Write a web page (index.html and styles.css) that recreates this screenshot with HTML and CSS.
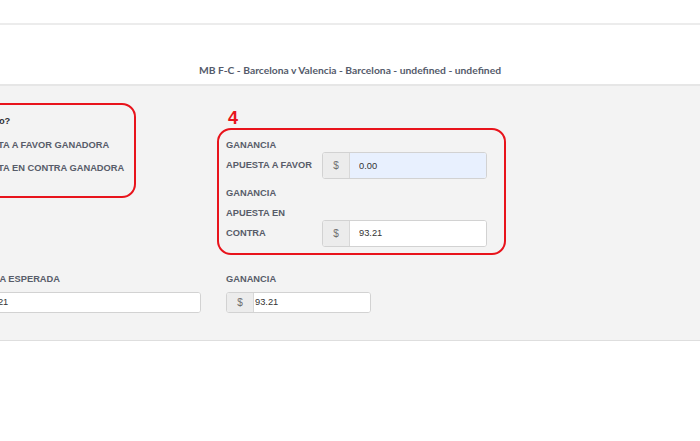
FILE: index.html
```html
<!DOCTYPE html>
<html lang="es">
<head>
  <meta charset="UTF-8" />
  <title>MB F-C</title>
  <link rel="stylesheet" href="styles.css">
</head>
<body>
  <div class="topbar"></div>

  <div class="title-bar">
    <span class="title">MB F-C - Barcelona v Valencia - Barcelona - undefined - undefined</span>
  </div>

  <div class="content">
    <div class="form">
      <div class="top-row">
        <!-- resultado -->
        <div class="col-left">
          <div class="result-box mark">
            <div class="question">¿Resultado?</div>
            <label class="radio">APUESTA A FAVOR GANADORA</label>
            <label class="radio">APUESTA EN CONTRA GANADORA</label>
          </div>
        </div>

        <!-- ganancias -->
        <div class="col-right">
          <div class="step">4</div>
          <div class="gain-box mark">
            <div class="gain-row">
              <div class="gain-label">GANANCIA APUESTA A FAVOR</div>
              <div class="input-group big">
                <span class="addon">$</span>
                <input type="text" class="field autofill" value="0.00" />
              </div>
            </div>
            <div class="gain-row">
              <div class="gain-label">GANANCIA APUESTA EN CONTRA</div>
              <div class="input-group big">
                <span class="addon">$</span>
                <input type="text" class="field" value="93.21" />
              </div>
            </div>
          </div>
        </div>
      </div>

      <div class="bottom-row">
        <div class="field-block left">
          <div class="field-label">GANANCIA ESPERADA</div>
          <div class="input-group small">
            <span class="addon">$</span>
            <input type="text" class="field flat" value="93.21" />
          </div>
        </div>
        <div class="field-block right">
          <div class="field-label">GANANCIA</div>
          <div class="input-group small">
            <span class="addon">$</span>
            <input type="text" class="field flat" value="93.21" />
          </div>
        </div>
      </div>
    </div>
  </div>
</body>
</html>
```

FILE: styles.css
```css
body {
  margin: 0;
  font-family: "Liberation Sans", Arial, sans-serif;
  background: #fff;
  overflow: hidden;
}

/* cabecera */
.topbar {
  height: 23px;
  background: #fff;
  border-bottom: 2px solid #ececec;
}
.title-bar {
  height: 61px;
  background: #fff;
  border-bottom: 2px solid #e6e6e6;
  display: flex;
  justify-content: center;
  align-items: flex-end;
  padding-bottom: 8px;
  box-sizing: border-box;
}
.title {
  font-family: Lato, "Liberation Sans", sans-serif;
  font-weight: bold;
  font-size: 10.3px;
  color: #555b6b;
}

/* zona gris */
.content {
  background: #f3f3f3;
  border-bottom: 1px solid #dedede;
  padding: 17px 0 27px;
  height: 255px;
  box-sizing: border-box;
}
.form {
  margin-left: -40px;
  color: #575c69;
  font-size: 9.3px;
  font-weight: bold;
}
.top-row {
  display: flex;
  align-items: flex-start;
}
.col-left {
  width: 241px;
}
.col-right {
  margin-left: 16px;
  padding-top: 6px;
}

.mark {
  border: 2px solid #e8131b;
  border-radius: 14px;
  box-sizing: border-box;
}

.result-box {
  margin-left: -20px;
  width: 196px;
  padding: 6px 0 18px 12px;
}
.question {
  color: #2e2f33;
  line-height: 20px;
}
.radio {
  display: block;
  padding-left: 12px;
  line-height: 20px;
  margin-top: 3.5px;
}

.step {
  color: #e8131b;
  font-size: 18px;
  font-weight: bold;
  line-height: 19px;
  padding-left: 11px;
}
.gain-box {
  width: 289px;
  padding: 6px 17px 6px 7px;
}
.gain-row {
  display: flex;
  align-items: flex-end;
  gap: 4px;
}
.gain-row + .gain-row {
  margin-top: 5px;
}
.gain-label {
  width: 92px;
  line-height: 19.8px;
  padding-bottom: 3.5px;
}

/* campos */
.input-group {
  display: flex;
  border: 1px solid #d2d2d2;
  border-radius: 3px;
  background: #fff;
  overflow: hidden;
  box-sizing: border-box;
}
.input-group.big {
  width: 165px;
  height: 27px;
}
.input-group.small {
  height: 21px;
}
.addon {
  width: 27px;
  flex-shrink: 0;
  background: #ececec;
  border-right: 1px solid #d8d8d8;
  color: #6f6f6f;
  font-weight: normal;
  font-size: 10px;
  display: flex;
  align-items: center;
  justify-content: center;
  box-sizing: border-box;
}
.field {
  flex: 1;
  min-width: 0;
  border: none;
  outline: none;
  padding: 0 0 0 9px;
  font-family: "Liberation Sans", Arial, sans-serif;
  font-size: 9.3px;
  color: #333;
  background: #fff;
}
.field.autofill {
  background: #e8f0fe;
}
.field.flat {
  padding-left: 1px;
}

.bottom-row {
  display: flex;
  margin-top: 14px;
}
.field-label {
  line-height: 20px;
  margin-bottom: 3px;
}
.field-block.left {
  width: 241px;
}
.field-block.left .field-label {
  margin-left: -4px;
}
.field-block.left .input-group {
  width: 241px;
}
.field-block.left .addon {
  width: 23px;
}
.field-block.right {
  margin-left: 25px;
}
.field-block.right .input-group {
  width: 145px;
}
```
